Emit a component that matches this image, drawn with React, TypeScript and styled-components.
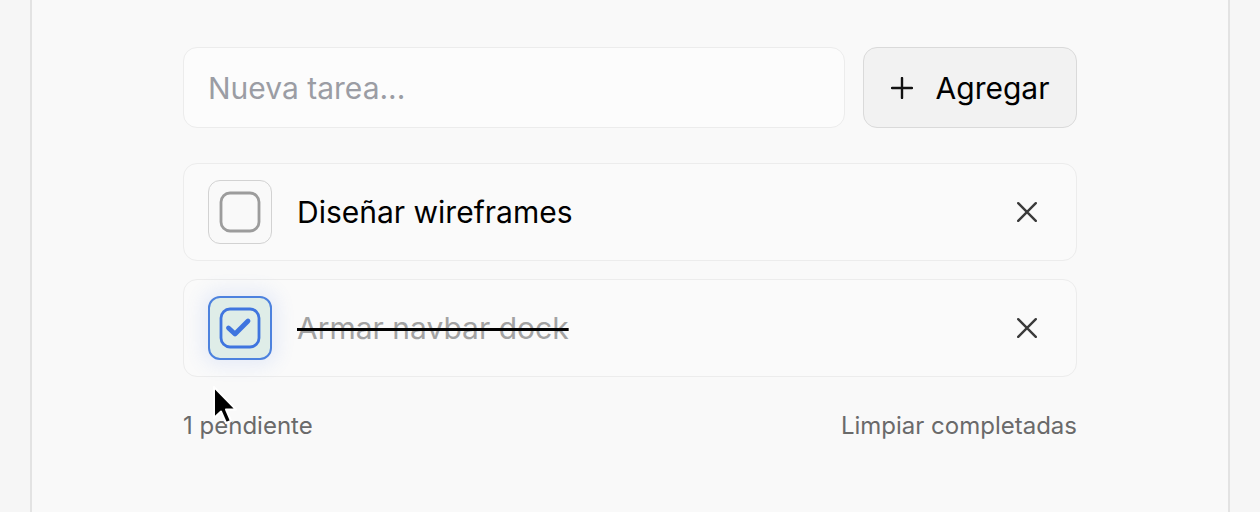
import styled, { createGlobalStyle } from "styled-components";

const GlobalStyle = createGlobalStyle`
  html, body {
    margin: 0;
    padding: 0;
    background: #f6f6f6;
    font-family: Inter, "Noto Sans", "Liberation Sans", sans-serif;
  }
`;

const Panel = styled.div`
  position: relative;
  margin: 0 30px;
  height: 512px;
  background: #f9f9f9;
  border-left: 2px solid #e3e3e3;
  border-right: 2px solid #e3e3e3;
  box-sizing: border-box;
  overflow: hidden;
`;

const Content = styled.div`
  width: 894px;
  margin: 0 auto;
  padding-top: 47px;
`;

const Form = styled.div`
  display: flex;
  gap: 18px;
`;

const Input = styled.input`
  flex: 1;
  height: 81px;
  box-sizing: border-box;
  border: 1.5px solid #ececec;
  border-radius: 14px;
  background: #fcfcfc;
  padding: 0 24px;
  font-family: inherit;
  font-size: 30px;
  color: #111;
  outline: none;
  &::placeholder {
    color: #9b9da4;
  }
`;

const AddButton = styled.button`
  width: 214px;
  height: 81px;
  box-sizing: border-box;
  display: flex;
  align-items: center;
  justify-content: center;
  gap: 23px;
  border: 1.5px solid #dadada;
  border-radius: 14px;
  background: #f2f2f2;
  font-family: inherit;
  font-size: 30px;
  color: #000;
  padding: 0;
`;

const List = styled.div`
  display: flex;
  flex-direction: column;
  gap: 18px;
  margin-top: 35px;
`;

const Row = styled.div`
  height: 98px;
  box-sizing: border-box;
  display: flex;
  align-items: center;
  padding: 0 39px 0 24px;
  border: 1.5px solid #ececec;
  border-radius: 14px;
  background: #fafafa;
`;

const Check = styled.div<{ $done: boolean }>`
  width: 64px;
  height: 64px;
  box-sizing: border-box;
  flex-shrink: 0;
  display: flex;
  align-items: center;
  justify-content: center;
  border-radius: 12px;
  border: ${(p) => (p.$done ? "2px solid #4d82de" : "1.5px solid #d2d2d2")};
  background: ${(p) => (p.$done ? "#dfede8" : "#f9f9f9")};
  box-shadow: ${(p) => (p.$done ? "0 0 18px 6px rgba(90, 130, 230, 0.12)" : "none")};
`;

const Label = styled.span<{ $done: boolean }>`
  flex: 1;
  margin-left: 25px;
  font-size: 30px;
  color: ${(p) => (p.$done ? "#a2a2a2" : "#000")};
  text-decoration: ${(p) => (p.$done ? "line-through" : "none")};
  text-decoration-color: #000;
  text-decoration-thickness: 3px;
`;

const Remove = styled.button`
  border: none;
  background: none;
  padding: 0;
  display: flex;
  color: #3a3a3a;
`;

const Footer = styled.div`
  display: flex;
  justify-content: space-between;
  margin-top: 36px;
  font-size: 24px;
  line-height: 26px;
  color: #6a6a6a;
`;

const Cursor = styled.svg`
  position: absolute;
  left: 180px;
  top: 385px;
`;

const BoxIcon = ({ done }: { done: boolean }) => (
  <svg width="42" height="42" viewBox="0 0 42 42" fill="none">
    <rect
      x="2"
      y="2"
      width="38"
      height="38"
      rx="9"
      stroke={done ? "#3f75df" : "#9c9c9c"}
      strokeWidth="2.8"
    />
    {done && (
      <path
        d="M9.5 21l6.5 6L29 14"
        stroke="#3f75df"
        strokeWidth="4.8"
        strokeLinecap="round"
        strokeLinejoin="round"
      />
    )}
  </svg>
);

const CloseIcon = () => (
  <svg width="20" height="20" viewBox="0 0 20 20" fill="none">
    <path d="M1.2 1.2l17.6 17.6M18.8 1.2L1.2 18.8" stroke="currentColor" strokeWidth="2.4" strokeLinecap="round" />
  </svg>
);

const PlusIcon = () => (
  <svg width="22" height="22" viewBox="0 0 22 22" fill="none">
    <path d="M11 1v20M1 11h20" stroke="#111" strokeWidth="2.4" strokeLinecap="round" />
  </svg>
);

const tasks = [
  { id: 1, text: "Diseñar wireframes", done: false },
  { id: 2, text: "Armar navbar dock", done: true },
];

export default function App() {
  const pending = tasks.filter((t) => !t.done).length;
  return (
    <>
      <GlobalStyle />
      <Panel>
        <Content>
          <Form>
            <Input placeholder="Nueva tarea..." />
            <AddButton>
              <PlusIcon />
              Agregar
            </AddButton>
          </Form>
          <List>
            {tasks.map((t) => (
              <Row key={t.id}>
                <Check $done={t.done}>
                  <BoxIcon done={t.done} />
                </Check>
                <Label $done={t.done}>{t.text}</Label>
                <Remove>
                  <CloseIcon />
                </Remove>
              </Row>
            ))}
          </List>
          <Footer>
            <span>{pending} pendiente</span>
            <span>Limpiar completadas</span>
          </Footer>
        </Content>
        <Cursor width="28" height="42" viewBox="0 0 28 42">
          <path
            d="M2 2 L2 33 L9 26.5 L14 38 L19 36 L14 24.5 L24 24.5 Z"
            fill="#000"
            stroke="#fff"
            strokeWidth="2"
            strokeLinejoin="round"
          />
        </Cursor>
      </Panel>
    </>
  );
}
